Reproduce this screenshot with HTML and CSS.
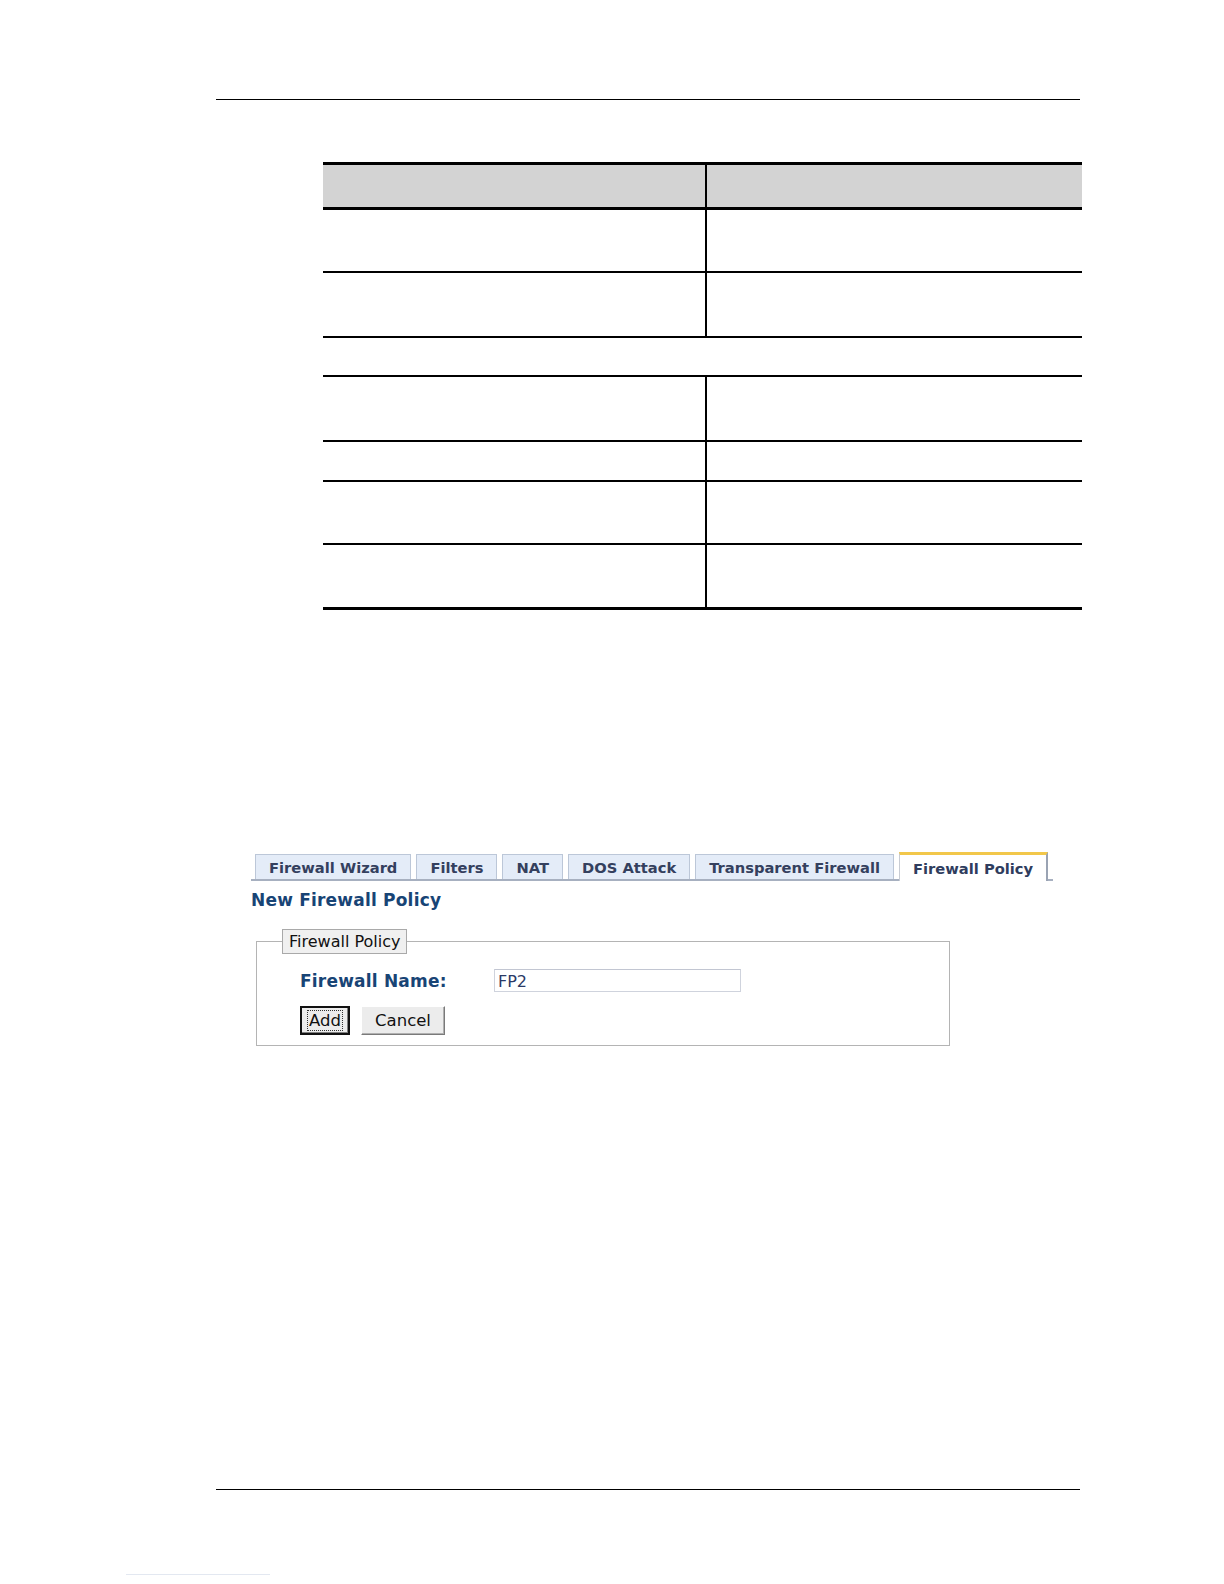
FILE: index.html
```html
<!DOCTYPE html>
<html>
<head>
<meta charset="utf-8">
<title>New Firewall Policy</title>
<link rel="stylesheet" href="styles.css">
</head>
<body>
<div class="page">
  <div class="rule-top"></div>

  <div class="spec">
    <div class="row head"><div class="cell"></div><div class="cell"></div></div>
    <div class="row r61"><div class="cell"></div><div class="cell"></div></div>
    <div class="row r63"><div class="cell"></div><div class="cell"></div></div>
    <div class="row full r37"><div class="cell"></div></div>
    <div class="row r63"><div class="cell"></div><div class="cell"></div></div>
    <div class="row r38"><div class="cell"></div><div class="cell"></div></div>
    <div class="row r61"><div class="cell"></div><div class="cell"></div></div>
    <div class="row r62 last"><div class="cell"></div><div class="cell"></div></div>
  </div>

  <div class="ui">
    <div class="tabs">
      <div class="tab">Firewall Wizard</div>
      <div class="tab">Filters</div>
      <div class="tab">NAT</div>
      <div class="tab">DOS Attack</div>
      <div class="tab">Transparent Firewall</div>
      <div class="tab active">Firewall Policy</div>
    </div>
    <div class="page-title">New Firewall Policy</div>
    <fieldset class="box">
      <legend class="box-legend">Firewall Policy</legend>
      <div class="form-row">
        <label class="form-label">Firewall Name:</label>
        <div class="text-input">FP2</div>
      </div>
      <div class="btn-row">
        <button class="btn focused"><span class="focus-ring">Add</span></button>
        <button class="btn">Cancel</button>
      </div>
    </fieldset>
  </div>

  <div class="rule-bottom"></div>
  <div class="faint-link"></div>
</div>
</body>
</html>
```

FILE: styles.css
```css
* { box-sizing: content-box; }
body {
  margin: 0;
  background: #ffffff;
  font-family: "DejaVu Sans", Verdana, sans-serif;
}
.page {
  width: 1224px;
  height: 1584px;
  overflow: hidden;
}
.rule-top {
  margin: 99px 0 0 216px;
  width: 864px;
  height: 1px;
  background: #000;
}

/* spec table */
.spec {
  margin: 62px 0 0 323px;
  width: 759px;
  border-top: 3px solid #000;
  border-bottom: 3px solid #000;
}
.row {
  display: grid;
  grid-template-columns: 382px 1fr;
  border-bottom: 2px solid #000;
}
.row .cell + .cell { border-left: 2px solid #000; }
.row.full { grid-template-columns: 1fr; }
.row.head {
  background: #d3d3d3;
  height: 42px;
  border-bottom-width: 3px;
}
.row.last { border-bottom: none; }
.r61 { height: 61px; }
.r62 { height: 62px; }
.r63 { height: 63px; }
.r37 { height: 37px; }
.r38 { height: 38px; }

/* UI screenshot */
.ui {
  margin: 242px 0 0 251px;
  width: 802px;
}
.tabs {
  display: flex;
  align-items: flex-end;
  gap: 5px;
  padding-left: 4px;
  height: 27px;
  border-bottom: 2px solid #a7b0c0;
}
.tab {
  height: 24px;
  line-height: 25px;
  padding: 0 13px;
  border: 1px solid #bcc7d8;
  border-bottom: none;
  background: #e4ecf8;
  color: #34405e;
  font-size: 14.7px;
  font-weight: bold;
  white-space: nowrap;
}
.tab.active {
  height: 26px;
  line-height: 28px;
  margin-bottom: -2px;
  background: #ffffff;
  border-top: 3px solid #f2c74a;
  border-left: 1px solid #c8ccd4;
  border-right: 2px solid #9aa3b3;
  color: #2f3d5e;
}
.page-title {
  margin-top: 8px;
  line-height: 22px;
  font-size: 17px;
  font-weight: bold;
  color: #184475;
  letter-spacing: 0.2px;
}
.box {
  margin: 18px 0 0 5px;
  width: 649px;
  padding: 0 0 10px 43px;
  border: 1px solid #b4b4b4;
  min-width: 0;
}
.box-legend {
  margin-left: -18px;
  padding: 0 6px;
  border: 1px solid #a9a9a9;
  background: #f0f0f0;
  font-size: 16px;
  line-height: 23px;
  color: #111;
}
.form-row {
  display: flex;
  align-items: center;
  margin-top: 15px;
}
.form-label {
  width: 194px;
  font-size: 17px;
  font-weight: bold;
  color: #184475;
  letter-spacing: 0.2px;
}
.text-input {
  width: 242px;
  height: 21px;
  line-height: 23px;
  padding-left: 3px;
  border: 1px solid #cfd3dd;
  border-top-color: #c2c6d2;
  background: #fff;
  color: #2b3a66;
  font-size: 16px;
}
.btn-row {
  display: flex;
  gap: 11px;
  margin-top: 14px;
}
.btn {
  height: 29px;
  padding: 0 8px;
  font-family: "DejaVu Sans", Verdana, sans-serif;
  font-size: 16.5px;
  color: #111;
  background: #ececec;
  border: 1px solid;
  border-color: #ffffff #7a7a7a #7a7a7a #ffffff;
  box-shadow: inset -1px -1px 0 #b0b0b0;
  box-sizing: border-box;
}
.btn + .btn { width: 84px; }
.btn.focused {
  width: 50px;
  padding: 0 3px;
  border: 2px solid #111;
  box-shadow: inset -1px -1px 0 #808080;
}
.focus-ring {
  display: inline-block;
  padding: 0 1px;
  line-height: 19px;
  border: 1px dotted #333;
}
.rule-bottom {
  margin: 443px 0 0 216px;
  width: 864px;
  height: 1px;
  background: #000;
}
.faint-link {
  margin: 84px 0 0 126px;
  width: 144px;
  height: 1px;
  background: #e3e8f1;
}
```
